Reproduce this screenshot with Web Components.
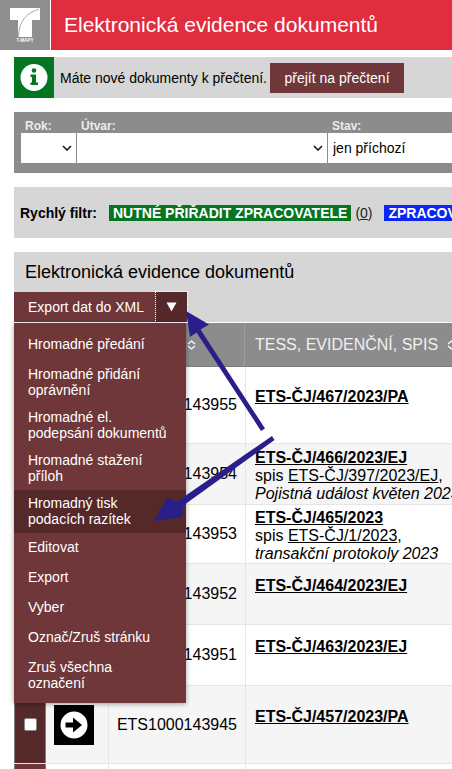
<!DOCTYPE html>
<html lang="cs">
<head>
<meta charset="utf-8">
<title>Elektronická evidence dokumentů</title>
<style>
  html, body {
    margin: 0;
    height: 769px;
    overflow: hidden;
    background: #fff;
    font-family: "Liberation Sans", Arial, sans-serif;
    color: #000;
  }

  main {
    display: flex;
    flex-direction: column;
    width: 800px;
    margin-left: 14px;
  }
</style>
</head>
<body>
<app-header>Elektronická evidence dokumentů</app-header>
<main>
  <info-bar action="přejít na přečtení">Máte nové dokumenty k přečtení.</info-bar>
  <filter-bar></filter-bar>
  <quick-filter></quick-filter>
  <doc-panel heading="Elektronická evidence dokumentů">
    <action-menu slot="menu">
      <menu-item>Hromadné předání</menu-item>
      <menu-item two>Hromadné přidání<br>oprávnění</menu-item>
      <menu-item two>Hromadné el.<br>podepsání dokumentů</menu-item>
      <menu-item two>Hromadné stažení<br>příloh</menu-item>
      <menu-item two active>Hromadný tisk<br>podacích razítek</menu-item>
      <menu-item>Editovat</menu-item>
      <menu-item>Export</menu-item>
      <menu-item>Vyber</menu-item>
      <menu-item>Označ/Zruš stránku</menu-item>
      <menu-item two>Zruš všechna<br>označení</menu-item>
    </action-menu>
    <doc-row height="77" top="21" number="ETS1000143955" ref="ETS-ČJ/467/2023/PA"></doc-row>
    <doc-row height="61" top="5" even number="ETS1000143954" ref="ETS-ČJ/466/2023/EJ" spis="ETS-ČJ/397/2023/EJ" note="Pojistná událost květen 2023"></doc-row>
    <doc-row height="59" top="4" number="ETS1000143953" ref="ETS-ČJ/465/2023" spis="ETS-ČJ/1/2023" note="transakční protokoly 2023"></doc-row>
    <doc-row height="61" top="13" even number="ETS1000143952" ref="ETS-ČJ/464/2023/EJ"></doc-row>
    <doc-row height="61" top="13" number="ETS1000143951" ref="ETS-ČJ/463/2023/EJ"></doc-row>
    <doc-row height="78" top="22" even dark number="ETS1000143945" ref="ETS-ČJ/457/2023/PA"></doc-row>
    <doc-row height="78" top="22"></doc-row>
  </doc-panel>
</main>
<guide-arrows></guide-arrows>

<script>
class AppHeader extends HTMLElement {
  constructor() {
    super();
    this.attachShadow({ mode: 'open' }).innerHTML = `
      <style>
        :host {
          display: flex;
          height: 50px;
          background: #e02d3f;
        }
        .logo {
          flex: none;
          width: 50px;
          height: 50px;
          background: #8f8f8f;
          border-right: 1px solid #fff;
        }
        h1 {
          margin: 0 0 0 13px;
          font: 400 21px/50px "Liberation Sans", Arial, sans-serif;
          color: #fff;
          white-space: nowrap;
        }
      </style>
      <svg class="logo" viewBox="0 0 50 50" aria-hidden="true">
        <path d="M10 8H40V20H32V37H18V20H10Z" fill="#fff"/>
        <path d="M39 9C27 13 19 20 18.5 37" fill="none" stroke="#a8a8a8" stroke-width="1"/>
        <text x="25" y="41.500" font-family="Liberation Sans" font-size="4.500" font-weight="700" fill="#fff" text-anchor="middle">T-MAPY</text>
      </svg>
      <h1><slot></slot></h1>
    `;
  }
}

class InfoBar extends HTMLElement {
  constructor() {
    super();
    this.attachShadow({ mode: 'open' }).innerHTML = `
      <style>
        :host {
          display: flex;
          align-items: center;
          height: 41px;
          margin-top: 7px;
          background: #d6d6d6;
          font-size: 14px;
        }
        .icon {
          flex: none;
          width: 40px;
          height: 41px;
          background: #047521;
        }
        .text {
          margin-left: 6px;
          white-space: nowrap;
        }
        button {
          margin: 0 0 0 3px;
          width: 134px;
          height: 30px;
          padding: 0;
          border: 0;
          background: #6f3739;
          color: #fff;
          font: inherit;
        }
      </style>
      <svg class="icon" viewBox="0 0 40 41" aria-hidden="true">
        <circle cx="20" cy="20.500" r="13.500" fill="#fff"/>
        <circle cx="20" cy="13.500" r="2.300" fill="#047521"/>
        <path d="M16.500 17.500H22V25.500H24V28H16.500V25.500H18V20H16.500Z" fill="#047521"/>
      </svg>
      <span class="text"><slot></slot></span>
      <button type="button"></button>
    `;
    this.shadowRoot.querySelector('button').textContent = this.getAttribute('action');
  }
}

class FilterBar extends HTMLElement {
  constructor() {
    super();
    const chevron = encodeURIComponent('<svg xmlns="http://www.w3.org/2000/svg" width="10" height="6"><path d="M1 1l4 4 4-4" fill="none" stroke="#222" stroke-width="1.700"/></svg>');
    this.attachShadow({ mode: 'open' }).innerHTML = `
      <style>
        :host {
          display: grid;
          grid-template-columns: 55px 250px 172px 1fr;
          column-gap: 1px;
          height: 61px;
          margin-top: 14px;
          padding: 8px 0 10px 7px;
          box-sizing: border-box;
          background: #8c8c8c;
        }
        label {
          display: flex;
          flex-direction: column;
          font-size: 12px;
          font-weight: 700;
          line-height: 13px;
          color: #ececec;
        }
        span {
          padding-left: 4px;
        }
        select {
          appearance: none;
          height: 30px;
          padding: 0 0 0 5px;
          border: 0;
          border-radius: 0;
          background: #fff url("data:image/svg+xml,${chevron}") no-repeat right 4px center;
          color: #000;
          font: 400 14px "Liberation Sans", Arial, sans-serif;
        }
      </style>
      <label><span>Rok:</span><select><option></option></select></label>
      <label><span>Útvar:</span><select><option></option></select></label>
      <label><span>Stav:</span><select><option>jen příchozí</option></select></label>
    `;
  }
}

class QuickFilter extends HTMLElement {
  constructor() {
    super();
    this.attachShadow({ mode: 'open' }).innerHTML = `
      <style>
        :host {
          display: flex;
          align-items: center;
          height: 51px;
          margin-top: 14px;
          padding-left: 6px;
          background: #d6d6d6;
          font-size: 14px;
          white-space: nowrap;
        }
        b {
          width: 89px;
        }
        .tag {
          height: 16px;
          padding: 0 4px;
          color: #fff;
          font-size: 14px;
          font-weight: 700;
          line-height: 16px;
        }
        .green { background: #047521; }
        .blue { background: #0a26f0; }
        .count {
          width: 33px;
          padding-left: 4px;
          box-sizing: border-box;
          color: #222;
        }
      </style>
      <b>Rychlý filtr:</b>
      <span class="tag green">NUTNÉ PŘIŘADIT ZPRACOVATELE</span>
      <span class="count">(<u>0</u>)</span>
      <span class="tag blue">ZPRACOVÁVÁ SE</span>
    `;
  }
}

class DocPanel extends HTMLElement {
  constructor() {
    super();
    const sort = `<svg class="sort" width="9" height="10" viewBox="0 0 9 10" aria-hidden="true"><path d="M1 4l3.500-3 3.500 3M1 6l3.500 3 3.500-3" fill="none" stroke="#fff" stroke-width="1.300"/></svg>`;
    this.attachShadow({ mode: 'open' }).innerHTML = `
      <style>
        :host {
          display: block;
          position: relative;
          margin-top: 14px;
        }
        .top {
          height: 70px;
          background: #d6d6d6;
        }
        h2 {
          margin: 0;
          padding: 10px 0 0 11px;
          height: 31px;
          box-sizing: border-box;
          font-size: 18px;
          font-weight: 400;
          line-height: 21px;
          white-space: nowrap;
        }
        .actions {
          display: flex;
          height: 30px;
          margin-top: 9px;
        }
        button {
          padding: 0;
          border: 0;
          color: #fff;
          font: 14px "Liberation Sans", Arial, sans-serif;
        }
        .export {
          width: 142px;
          padding-left: 2px;
          background: #6f3739;
        }
        .toggle {
          display: flex;
          align-items: center;
          justify-content: center;
          width: 31px;
          background: #55282a;
          outline: 1px dotted #fff;
        }
        .head {
          display: grid;
          grid-template-columns: 231px 1fr;
          height: 44px;
          margin-top: 1px;
          background: #8c8c8c;
          color: #f0f0f0;
          font-size: 16px;
          border-bottom: 1px solid #7d7d7d;
          box-sizing: border-box;
        }
        .head div {
          display: flex;
          align-items: center;
          justify-content: flex-end;
          padding-right: 49px;
          border-right: 1px solid #9e9e9e;
        }
        .head div + div {
          justify-content: flex-start;
          gap: 9px;
          padding: 0 0 0 10px;
          border: 0;
        }
        .head .first {
          padding-right: 48px;
        }
        ::slotted(action-menu) {
          position: absolute;
          left: 0;
          top: 71px;
          z-index: 2;
        }
      </style>
      <div class="top">
        <h2></h2>
        <div class="actions">
          <button class="export" type="button">Export dat do XML</button>
          <button class="toggle" type="button" aria-label="Rozbalit">
            <svg width="11" height="10" viewBox="0 0 11 10" aria-hidden="true"><path d="M.5.500H10.500L5.500 9.500Z" fill="#fff"/></svg>
          </button>
        </div>
      </div>
      <div class="head">
        <div class="first">${sort}</div>
        <div><span>TESS, EVIDENČNÍ, SPIS</span>${sort}</div>
      </div>
      <slot name="menu"></slot>
      <slot></slot>
    `;
    this.shadowRoot.querySelector('h2').textContent = this.getAttribute('heading');
  }
}

class ActionMenu extends HTMLElement {
  constructor() {
    super();
    this.attachShadow({ mode: 'open' }).innerHTML = `
      <style>
        :host {
          display: flex;
          flex-direction: column;
          width: 172px;
          height: 380px;
          padding-top: 7px;
          box-sizing: border-box;
          background: #6f3739;
          box-shadow: 0 1px 5px rgba(0, 0, 0, .35);
        }
      </style>
      <slot></slot>
    `;
  }
}

class MenuItem extends HTMLElement {
  constructor() {
    super();
    this.attachShadow({ mode: 'open' }).innerHTML = `
      <style>
        :host {
          display: block;
          padding: 6px 14px 8px;
          color: #fff;
          font-size: 14px;
          line-height: 16px;
        }
        :host([two]) {
          padding: 5px 14px 6px;
        }
        :host([active]) {
          background: #55282a;
        }
        :host(:first-child) {
          padding-bottom: 9px;
        }
        :host(:last-child) {
          padding-top: 6px;
        }
      </style>
      <slot></slot>
    `;
  }
}

class DocRow extends HTMLElement {
  constructor() {
    super();
    const number = this.getAttribute('number');
    const ref = this.getAttribute('ref');
    const spis = this.getAttribute('spis');
    const note = this.getAttribute('note');
    this.attachShadow({ mode: 'open' }).innerHTML = `
      <style>
        :host {
          display: grid;
          grid-template-columns: 32px 63px 137px 1fr;
          height: ${this.getAttribute('height')}px;
          box-sizing: border-box;
          border-bottom: 1px solid #e6e6e6;
          font-size: 16px;
          line-height: 18px;
          background: #fff;
        }
        :host([even]) {
          background: #f5f5f5;
        }
        .check {
          display: flex;
          align-items: center;
          justify-content: center;
          background: #6f3739;
          border-left: 1px solid #7d7d7d;
          border-right: 1px solid #7d7d7d;
          box-sizing: border-box;
        }
        :host([dark]) .check {
          background: #55282a;
        }
        .box {
          width: 11px;
          height: 11px;
          border: 1px solid #8a8a8a;
          border-radius: 2px;
          background: #fff;
        }
        .icon, .number {
          display: flex;
          align-items: center;
          border-right: 1px solid #e6e6e6;
        }
        .icon {
          padding-left: 8px;
        }
        .number {
          justify-content: flex-end;
          padding-right: 8px;
        }
        .text {
          padding: ${this.getAttribute('top')}px 0 0 9px;
          white-space: nowrap;
        }
        a {
          color: inherit;
        }
        .ref {
          font-weight: 700;
        }
      </style>
      <div class="check">${ref ? '<span class="box"></span>' : ''}</div>
      <div class="icon">${ref ? `
        <svg width="40" height="40" viewBox="0 0 40 40" aria-hidden="true">
          <rect width="40" height="40"/>
          <circle cx="20" cy="20" r="13.500" fill="#fff"/>
          <path d="M11.500 17.500H19V12.500L28 20L19 27.500V22.500H11.500Z"/>
        </svg>` : ''}</div>
      <div class="number">${number || ''}</div>
      <div class="text">
        ${ref ? `<a class="ref" href="#">${ref}</a>` : ''}
        ${spis ? `<br>spis <a href="#">${spis}</a>,<br><i>${note}</i>` : ''}
      </div>
    `;
  }
}

class GuideArrows extends HTMLElement {
  constructor() {
    super();
    this.attachShadow({ mode: 'open' }).innerHTML = `
      <style>
        :host {
          position: absolute;
          left: 0;
          top: 0;
          z-index: 5;
          pointer-events: none;
        }
        svg {
          display: block;
        }
      </style>
      <svg width="452" height="769" viewBox="0 0 452 769" aria-hidden="true" fill="#2a1f8a">
        <path d="M186 311L209 324.500L200.500 329.500L265 428.500L261 431L196.500 332.500L190 337Z"/>
        <path d="M274.500 440L184 505L181.500 517L154 521L167 498L177 501.500L272 436Z"/>
      </svg>
    `;
  }
}

customElements.define('app-header', AppHeader);
customElements.define('info-bar', InfoBar);
customElements.define('filter-bar', FilterBar);
customElements.define('quick-filter', QuickFilter);
customElements.define('doc-panel', DocPanel);
customElements.define('action-menu', ActionMenu);
customElements.define('menu-item', MenuItem);
customElements.define('doc-row', DocRow);
customElements.define('guide-arrows', GuideArrows);
</script>
</body>
</html>
